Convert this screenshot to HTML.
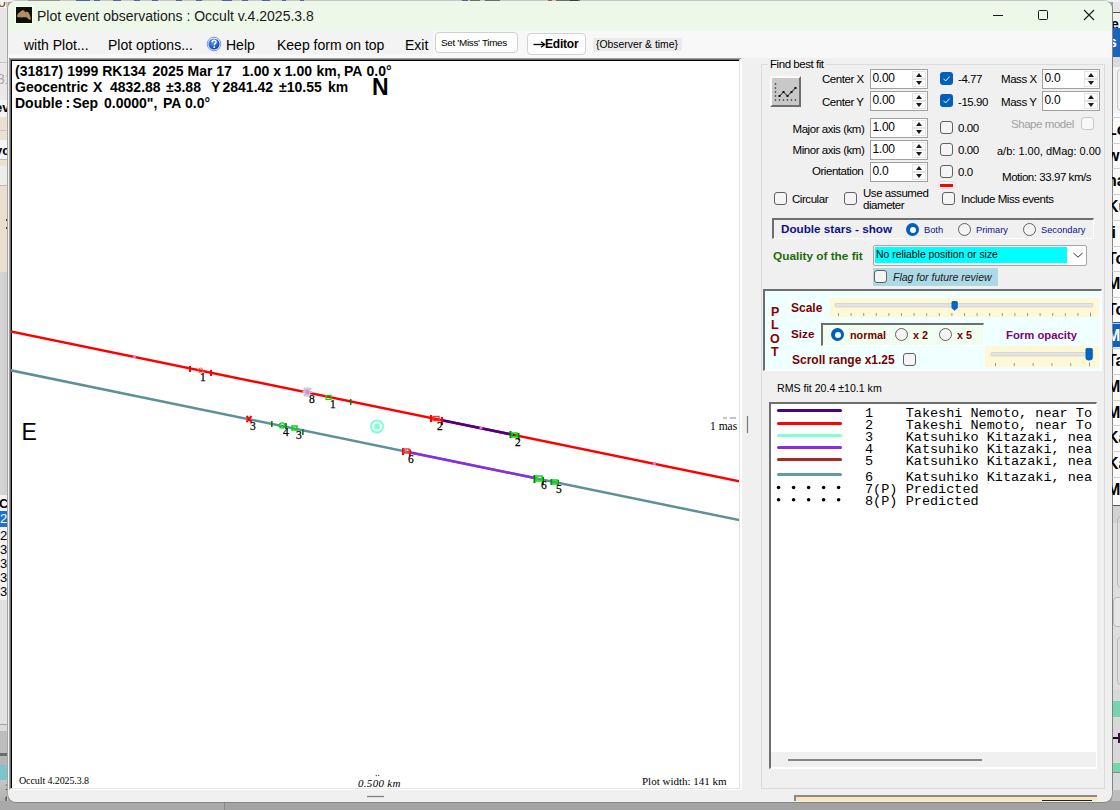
<!DOCTYPE html>
<html><head><meta charset="utf-8">
<style>
*{margin:0;padding:0;box-sizing:border-box}
html,body{width:1120px;height:810px;overflow:hidden;background:#a7a7a7;font-family:"Liberation Sans",sans-serif;position:relative;color:#000}
.a{position:absolute}
.t{position:absolute;white-space:nowrap;line-height:14px;font-size:11.5px;letter-spacing:-0.45px}
.b{font-weight:bold}
.pt{position:absolute;white-space:nowrap;line-height:14px;font-size:14px;font-weight:bold;color:#000}
.cb{position:absolute;width:13px;height:13px;border:1px solid #616161;border-radius:3px;background:#f4f4f4}
.cbk{position:absolute;width:13px;height:13px;border-radius:3px;background:#005fb8}
.rd{position:absolute;width:13px;height:13px;border:1px solid #616161;border-radius:50%;background:#f4f4f4}
.rds{position:absolute;width:13px;height:13px;border-radius:50%;background:#005fb8}
.rds:after{content:"";position:absolute;left:3.5px;top:3.5px;width:6px;height:6px;border-radius:50%;background:#fff}
.nud{position:absolute;width:58px;height:20px;border:1px solid #a0a0a0;background:#fff}
.nud .v{position:absolute;left:1.5px;top:0.5px;font-size:12px;line-height:14px;color:#000;letter-spacing:-0.3px}
.nud .up,.nud .dn{position:absolute;left:41px;width:14px;height:8px;background:#fdfdfd;border:1px solid #e4e4e4}
.nud .up{top:1px}.nud .dn{top:9px}
.nud .up:after,.nud .dn:after{content:"";position:absolute;left:2.8px;border-left:3.5px solid transparent;border-right:3.5px solid transparent}
.nud .up:after{top:1px;border-bottom:4px solid #1a1a1a}
.nud .dn:after{top:1px;border-top:4px solid #1a1a1a}
.mono{position:absolute;white-space:nowrap;font-family:"Liberation Mono",monospace;font-size:13.5px;line-height:12px;color:#000;margin-top:0.5px}
.ll{position:absolute;left:776.5px;width:65px;height:3px;border-radius:1.5px}
</style></head><body>
<!-- ===== background behind window ===== -->
<div class="a" style="left:0;top:0;width:8px;height:810px;background:#e2e2e2;overflow:hidden">
  <div class="a" style="left:0;top:0;width:8px;height:8px;background:#fafafa"></div>
  <div class="t" style="left:-2px;top:-5px;font-size:14px;color:#7a4a10;letter-spacing:0">or</div>
  <div class="a" style="left:0;top:8px;width:8px;height:54px;background:#e6e6e6"></div>
  <div class="a" style="left:0;top:62px;width:8px;height:1px;background:#c6c6c6"></div>
  <div class="a" style="left:0;top:63px;width:8px;height:37px;background:#e9e9e9"></div>
  <div class="t" style="left:-3px;top:72px;font-size:14px;color:#a8a8a8;letter-spacing:0">31</div>
  <div class="a" style="left:0;top:100px;width:8px;height:17px;background:#f3f3f3"></div>
  <div class="t b" style="left:-5px;top:101px;font-size:13px;color:#000;letter-spacing:0">ev</div>
  <div class="a" style="left:0;top:117px;width:8px;height:23px;background:#ebe1d1"></div>
  <div class="a" style="left:0;top:130px;width:8px;height:1px;background:#cfc8bc"></div>
  <div class="a" style="left:0;top:140px;width:8px;height:20px;background:#f5f5f5"></div>
  <div class="t b" style="left:-5px;top:144px;font-size:13px;color:#000;letter-spacing:0">yc</div>
  <div class="a" style="left:0;top:159px;width:8px;height:1px;background:#b8b8b8"></div>
  <div class="a" style="left:0;top:160px;width:8px;height:6px;background:#ebe1d1"></div>
  <div class="a" style="left:0;top:166px;width:8px;height:20px;background:#ececec"></div>
  <div class="a" style="left:0;top:185px;width:8px;height:1px;background:#b8b8b8"></div>
  <div class="a" style="left:0;top:186px;width:8px;height:86px;background:#e9dfcf"></div>
  <div class="a" style="left:6px;top:219px;width:2px;height:2px;background:#5a3a10"></div>
  <div class="a" style="left:6px;top:227px;width:2px;height:2px;background:#5a3a10"></div>
  <div class="a" style="left:0;top:272px;width:8px;height:223px;background:linear-gradient(90deg,#d6d6d6,#cdcdcd)"></div>
  <div class="a" style="left:0;top:495px;width:8px;height:105px;background:#f2f2f2"></div>
  <div class="t b" style="left:-1px;top:497px;font-size:13px;color:#000;letter-spacing:0">C</div>
  <div class="a" style="left:0;top:511px;width:8px;height:16px;background:#1f6fd0"></div>
  <div class="t" style="left:0;top:512px;font-size:13px;color:#fff;letter-spacing:0">2</div>
  <div class="t" style="left:0;top:529px;font-size:13px;color:#000;letter-spacing:0">2</div>
  <div class="t" style="left:0;top:543px;font-size:13px;color:#000;letter-spacing:0">3</div>
  <div class="t" style="left:0;top:557px;font-size:13px;color:#000;letter-spacing:0">3</div>
  <div class="t" style="left:0;top:571px;font-size:13px;color:#000;letter-spacing:0">3</div>
  <div class="t" style="left:0;top:585px;font-size:13px;color:#000;letter-spacing:0">3</div>
  <div class="a" style="left:0;top:600px;width:8px;height:123px;background:#e2e2e2"></div>
  <div class="a" style="left:0;top:724px;width:8px;height:1px;background:#a0a0a0"></div>
  <div class="a" style="left:0;top:725px;width:8px;height:6px;background:#dcdcdc"></div>
  <div class="a" style="left:0;top:731px;width:8px;height:22px;background:#bdbdbd"></div>
  <div class="a" style="left:0;top:753px;width:8px;height:3px;background:#6c6c6c"></div>
  <div class="a" style="left:0;top:756px;width:8px;height:9px;background:#b6b6b6"></div>
  <div class="a" style="left:0;top:765px;width:8px;height:15px;background:#7cc4c8"></div>
  <div class="a" style="left:0;top:780px;width:8px;height:30px;background:linear-gradient(#c6c6c6,#a8a8a8)"></div>
  <div class="t" style="letter-spacing:0;left:5px;top:780px;font-size:9px;color:#333">1</div>
  <div class="t" style="letter-spacing:0;left:5px;top:792px;font-size:10px;color:#333">e</div>
  <div class="a" style="left:7px;top:0;width:1px;height:810px;background:#c8c8c8"></div>
</div>
<div class="a" style="left:1112px;top:0;width:8px;height:810px;background:#f0f0f0;overflow:hidden">
  <div class="a" style="left:0;top:0;width:8px;height:12px;background:#e6e6e6"></div>
  <div class="a" style="left:0;top:12px;width:8px;height:1px;background:#555"></div>
  <div class="t b" style="left:-1px;top:17px;font-size:14px;color:#000;letter-spacing:0">e</div>
  <div class="a" style="left:0;top:28px;width:8px;height:29px;background:#1a64c0"></div>
  <div class="t b" style="left:-3px;top:35px;font-size:14px;color:#fff;letter-spacing:0">s</div>
  <div class="a" style="left:0;top:57px;width:8px;height:10px;background:#dcdcdc"></div>
  <div class="a" style="left:0;top:67px;width:8px;height:45px;background:#f3f3f3"></div>
  <div class="a" style="left:5px;top:69px;width:10px;height:42px;border:1px solid #c8c8c8;border-radius:4px"></div>
  <div class="a" style="left:0;top:113px;width:8px;height:392px;background:#fafafa"></div>
  <div class="a" style="left:0;top:335px;width:8px;height:0;"></div>
  <div class="a" style="left:0;top:322px;width:8px;height:25px;background:#0f5fc0"></div>
  <div class="a" style="left:0;top:505px;width:8px;height:185px;background:#dedede"></div>
  <div class="a" style="left:0;top:505px;width:8px;height:1px;background:#555"></div>
  <div class="a" style="left:0;top:506px;width:8px;height:17px;background:#d2d2d2"></div>
  <div class="a" style="left:5px;top:516px;width:10px;height:72px;border:1px solid #b8b8b8;border-radius:4px"></div>
  <div class="a" style="left:0.5px;top:597px;width:12px;height:30px;border:1px solid #b8b8b8;border-radius:4px;background:#e6e6e6"></div>
  <div class="a" style="left:5px;top:637px;width:10px;height:48px;border:1px solid #b8b8b8;border-radius:4px"></div>
  <div class="a" style="left:0;top:690px;width:8px;height:100px;background:#d8d8d8"></div>
  <div class="a" style="left:0;top:701px;width:8px;height:16px;background:#78d4ac"></div>
  <div class="a" style="left:1px;top:737px;width:7px;height:1.5px;background:#111"></div>
  <div class="a" style="left:6px;top:733px;width:2px;height:10px;background:#3a1040"></div>
  <div class="a" style="left:0;top:762.5px;width:8px;height:9px;background:#78d4ac"></div>
  <div class="a" style="left:0;top:771.5px;width:8px;height:1px;background:#888"></div>
  <div class="a" style="left:0;top:790px;width:8px;height:20px;background:#bdbdbd"></div>
  <div class="a" style="left:0;top:0;width:1px;height:790px;background:#a0a0a0"></div>
  <div class="a" style="left:0;top:117.0px;width:8px;height:1px;background:#d0d0d0"></div>
  <div class="t b" style="left:-5px;top:122.0px;font-size:16px;line-height:16px;color:#000;letter-spacing:0">Lo</div>
  <div class="a" style="left:0;top:142.7px;width:8px;height:1px;background:#d0d0d0"></div>
  <div class="t b" style="left:-5px;top:147.7px;font-size:16px;line-height:16px;color:#000;letter-spacing:0">w</div>
  <div class="a" style="left:0;top:168.4px;width:8px;height:1px;background:#d0d0d0"></div>
  <div class="t b" style="left:-5px;top:173.4px;font-size:16px;line-height:16px;color:#000;letter-spacing:0">na</div>
  <div class="a" style="left:0;top:194.1px;width:8px;height:1px;background:#d0d0d0"></div>
  <div class="t b" style="left:-5px;top:199.1px;font-size:16px;line-height:16px;color:#000;letter-spacing:0">Ku</div>
  <div class="a" style="left:0;top:219.8px;width:8px;height:1px;background:#d0d0d0"></div>
  <div class="t b" style="left:-5px;top:224.8px;font-size:16px;line-height:16px;color:#000;letter-spacing:0">li</div>
  <div class="a" style="left:0;top:245.5px;width:8px;height:1px;background:#d0d0d0"></div>
  <div class="t b" style="left:-5px;top:250.5px;font-size:16px;line-height:16px;color:#000;letter-spacing:0">To</div>
  <div class="a" style="left:0;top:271.2px;width:8px;height:1px;background:#d0d0d0"></div>
  <div class="t b" style="left:-5px;top:276.2px;font-size:16px;line-height:16px;color:#000;letter-spacing:0">Mu</div>
  <div class="a" style="left:0;top:296.9px;width:8px;height:1px;background:#d0d0d0"></div>
  <div class="t b" style="left:-5px;top:301.9px;font-size:16px;line-height:16px;color:#000;letter-spacing:0">To</div>
  <div class="a" style="left:0;top:322.6px;width:8px;height:1px;background:#d0d0d0"></div>
  <div class="t b" style="left:-5px;top:327.6px;font-size:16px;line-height:16px;color:#fff;letter-spacing:0">Mu</div>
  <div class="a" style="left:0;top:348.3px;width:8px;height:1px;background:#d0d0d0"></div>
  <div class="t b" style="left:-5px;top:353.3px;font-size:16px;line-height:16px;color:#000;letter-spacing:0">Ta</div>
  <div class="a" style="left:0;top:374.0px;width:8px;height:1px;background:#d0d0d0"></div>
  <div class="t b" style="left:-5px;top:379.0px;font-size:16px;line-height:16px;color:#000;letter-spacing:0">Me</div>
  <div class="a" style="left:0;top:399.7px;width:8px;height:1px;background:#d0d0d0"></div>
  <div class="t b" style="left:-5px;top:404.7px;font-size:16px;line-height:16px;color:#000;letter-spacing:0">Ma</div>
  <div class="a" style="left:0;top:425.4px;width:8px;height:1px;background:#d0d0d0"></div>
  <div class="t b" style="left:-5px;top:430.4px;font-size:16px;line-height:16px;color:#000;letter-spacing:0">Ka</div>
  <div class="a" style="left:0;top:451.1px;width:8px;height:1px;background:#d0d0d0"></div>
  <div class="t b" style="left:-5px;top:456.1px;font-size:16px;line-height:16px;color:#000;letter-spacing:0">Ka</div>
  <div class="a" style="left:0;top:476.8px;width:8px;height:1px;background:#d0d0d0"></div>
  <div class="t b" style="left:-5px;top:481.8px;font-size:16px;line-height:16px;color:#000;letter-spacing:0">Mu</div>
</div>
<div class="a" style="left:0;top:801px;width:224px;height:9px;background:#a9a9a9"></div><div class="a" style="left:224px;top:801px;width:896px;height:9px;background:#a3a3a3;border-left:1px solid #8a8a8a"></div>

<div class="a" style="left:0;top:0;width:1120px;height:2px;background:#f2f2f2"></div>
<div class="a" style="left:28px;top:0;width:32px;height:1.5px;background:#9a9a9a;opacity:0.7"></div>
<div class="a" style="left:76px;top:0;width:14px;height:1.5px;background:#3040c0;opacity:0.7"></div>
<div class="a" style="left:94px;top:0;width:6px;height:1.5px;background:#3040c0;opacity:0.7"></div>
<div class="a" style="left:113px;top:0;width:8px;height:1.5px;background:#3040c0;opacity:0.7"></div>
<div class="a" style="left:134px;top:0;width:6px;height:1.5px;background:#3040c0;opacity:0.7"></div>
<div class="a" style="left:152px;top:0;width:6px;height:1.5px;background:#3040c0;opacity:0.7"></div>
<div class="a" style="left:176px;top:0;width:6px;height:1.5px;background:#3040c0;opacity:0.7"></div>
<div class="a" style="left:196px;top:0;width:6px;height:1.5px;background:#3040c0;opacity:0.7"></div>
<div class="a" style="left:222px;top:0;width:10px;height:1.5px;background:#3040c0;opacity:0.7"></div>
<div class="a" style="left:242px;top:0;width:6px;height:1.5px;background:#3040c0;opacity:0.7"></div>
<div class="a" style="left:262px;top:0;width:8px;height:1.5px;background:#3040c0;opacity:0.7"></div>
<div class="a" style="left:282px;top:0;width:4px;height:1.5px;background:#3040c0;opacity:0.7"></div>
<div class="a" style="left:300px;top:0;width:4px;height:1.5px;background:#3040c0;opacity:0.7"></div>
<div class="a" style="left:462px;top:0;width:6px;height:1.5px;background:#3040c0;opacity:0.7"></div>
<div class="a" style="left:470px;top:0;width:10px;height:1.5px;background:#555;opacity:0.7"></div>
<div class="a" style="left:485px;top:0;width:15px;height:1.5px;background:#555;opacity:0.7"></div>
<div class="a" style="left:548px;top:0;width:4px;height:1.5px;background:#c03030;opacity:0.7"></div>
<div class="a" style="left:556px;top:0;width:24px;height:1.5px;background:#555;opacity:0.7"></div>
<div class="a" style="left:570px;top:0;width:8px;height:1.5px;background:#333;opacity:0.7"></div>
<!-- ===== window ===== -->
<div class="a" style="left:7px;top:0px;width:1106px;height:803px;border-radius:9px;background:rgba(0,0,0,0.18)"></div>
<div class="a" style="left:8px;top:1px;width:1104px;height:801px;background:#f0f0f0;border-radius:8px;overflow:hidden">
  <div class="a" style="left:0;top:0;width:1104px;height:30px;background:#eef8e8"></div>
  <div class="a" style="left:0;top:30px;width:1104px;height:27px;background:#f8f8f8"></div>
  <div class="a" style="left:0;top:30px;width:425px;height:23px;background:#f3f3f3"></div>
</div>

<!-- title bar -->
<svg class="a" style="left:15px;top:6px" width="18" height="18" viewBox="-1 -1 18 18"><rect x="-1" y="-1" width="18" height="18" fill="#fbfff8"/><rect x="0" y="0" width="16" height="16" fill="#100e0a"/><path d="M1 9.3C1 7.5 3 5.5 4.5 4.5L6.8 3L8 3.6L9.3 5.2C10.2 4.8 11 4.6 11.8 4.9C13.2 5.6 14 8 14.7 11.2C14.9 12.6 14 13 13.2 12.6C12 12 11.2 10.6 10.3 10.3C8.5 10 6 10.6 3.5 10.3C2 10.1 1 10.2 1 9.3Z" fill="#b08d64"/></svg>
<div class="t" style="letter-spacing:0;left:37px;top:8px;font-size:14px;line-height:16px;color:#1a1a1a">Plot event observations : Occult v.4.2025.3.8</div>
<div class="a" style="left:993px;top:15px;width:10px;height:1px;background:#1a1a1a"></div>
<div class="a" style="left:1038px;top:10px;width:10px;height:10px;border:1px solid #1a1a1a;border-radius:1.5px"></div>
<svg class="a" style="left:1083px;top:9px" width="12" height="12" viewBox="0 0 12 12"><path d="M1 1L11 11M11 1L1 11" stroke="#1a1a1a" stroke-width="1.1"/></svg>

<!-- menu bar -->
<div class="t" style="letter-spacing:0;left:24px;top:37px;font-size:14px;line-height:16px">with Plot...</div>
<div class="t" style="letter-spacing:0;left:108px;top:37px;font-size:14px;line-height:16px">Plot options...</div>
<svg class="a" style="left:206px;top:36px" width="16" height="16" viewBox="0 0 16 16"><defs><radialGradient id="hg" cx="0.4" cy="0.3" r="0.7"><stop offset="0" stop-color="#5a9cff"/><stop offset="1" stop-color="#1240b8"/></radialGradient></defs><circle cx="8" cy="8" r="6.8" fill="#fff" stroke="#5a7cc8" stroke-width="0.8"/><circle cx="8" cy="8" r="5.6" fill="url(#hg)"/><path d="M6 6.3C6 4.8 7 4.2 8.1 4.2C9.3 4.2 10.1 5 10.1 6C10.1 7.2 8.6 7.4 8.4 8.6V9.3" stroke="#fff" stroke-width="1.4" fill="none"/><circle cx="8.3" cy="11.2" r="0.9" fill="#fff"/></svg>
<div class="t" style="letter-spacing:0;left:226px;top:37px;font-size:14px;line-height:16px">Help</div>
<div class="t" style="letter-spacing:0;left:277px;top:37px;font-size:14px;line-height:16px">Keep form on top</div>
<div class="t" style="letter-spacing:0;left:405px;top:37px;font-size:14px;line-height:16px">Exit</div>
<div class="a" style="left:434.5px;top:32px;width:83px;height:20.5px;background:#fdfdfd;border:1px solid #d0d0d0;border-radius:4px"></div>
<div class="t" style="letter-spacing:-0.3px;left:441px;top:35.5px;font-size:9.9px">Set 'Miss' Times</div>
<div class="a" style="left:527px;top:33px;width:59px;height:22px;background:#fdfdfd;border:1px solid #d3d3d3;border-radius:4px"></div>
<svg class="a" style="left:533px;top:41px" width="13" height="7" viewBox="0 0 13 7"><path d="M0.5 3.5H11" stroke="#000" stroke-width="1.3"/><path d="M8 0.8L11.8 3.5L8 6.2" stroke="#000" stroke-width="1.3" fill="none"/></svg>
<div class="t b" style="left:545px;top:37px;font-size:12px;color:#000;letter-spacing:-0.2px">Editor</div>
<div class="a" style="left:593px;top:38px;width:89px;height:13px;background:#ebebeb"></div>
<div class="t" style="left:596px;top:38px;font-size:10.4px;letter-spacing:0">{Observer &amp; time}</div>

<!-- ===== plot panel ===== -->
<div class="a" style="left:9px;top:58px;width:733px;height:732px;background:#fff;border-left:1px solid #a0a0a0;border-top:1px solid #a0a0a0;border-right:1px solid #fff;border-bottom:1px solid #fff"></div>
<div class="a" style="left:10px;top:59px;width:730px;height:730px;border-left:1px solid #696969;border-top:1px solid #696969;border-right:1px solid #e3e3e3;border-bottom:1px solid #e3e3e3"></div>
<div class="a" style="left:11px;top:60px;width:1px;height:728px;background:#000"></div>
<div class="a" style="left:11px;top:60px;width:728px;height:1px;background:#000"></div>

<div class="pt" style="left:15px;top:64px">(31817) 1999 RK134</div>
<div class="pt" style="left:152.5px;top:64px">2025 Mar 17</div>
<div class="pt" style="left:242px;top:64px">1.00 x 1.00</div>
<div class="pt" style="left:316.5px;top:64px">km,</div>
<div class="pt" style="left:344px;top:64px">PA</div>
<div class="pt" style="left:366.5px;top:64px">0.0°</div>
<div class="pt" style="left:15px;top:80px">Geocentric</div>
<div class="pt" style="left:93px;top:80px">X</div>
<div class="pt" style="left:110px;top:80px">4832.88</div>
<div class="pt" style="left:166px;top:80px">±3.88</div>
<div class="pt" style="left:211px;top:80px">Y</div>
<div class="pt" style="left:222.5px;top:80px">2841.42</div>
<div class="pt" style="left:279px;top:80px">±10.55</div>
<div class="pt" style="left:328px;top:80px">km</div>
<div class="pt" style="left:15px;top:95.5px">Double</div>
<div class="pt" style="left:65.5px;top:95.5px">:</div>
<div class="pt" style="left:72.5px;top:95.5px">Sep</div>
<div class="pt" style="left:104px;top:95.5px">0.0000",</div>
<div class="pt" style="left:163px;top:95.5px">PA</div>
<div class="pt" style="left:185px;top:95.5px">0.0°</div>
<div class="t b" style="left:372px;top:75.5px;font-size:23px;line-height:23px;color:#000;letter-spacing:0">N</div>
<div class="t" style="left:21.5px;top:421px;font-size:23px;line-height:23px;color:#000;letter-spacing:0">E</div>

<svg class="a" style="left:0;top:0" width="1120" height="810" viewBox="0 0 1120 810">
  <defs><clipPath id="pc"><rect x="11" y="61" width="728" height="727"/></clipPath></defs>
  <g clip-path="url(#pc)" stroke-linecap="butt">
    <line x1="0" y1="329.3" x2="745" y2="482.5" stroke="#ff0000" stroke-width="2.4"/>
    <line x1="0" y1="368.1" x2="745" y2="521.3" stroke="#5f9099" stroke-width="2.5"/>
    <line x1="442" y1="420.2" x2="514" y2="435.0" stroke="#4b0082" stroke-width="2.6"/>
    <line x1="409" y1="452.2" x2="536" y2="478.3" stroke="#8a2be2" stroke-width="2.6"/>
  </g>
  <!-- markers -->
  <g fill="none">
    <circle cx="134.5" cy="356.6" r="1.6" fill="#ff66cc"/>
    <circle cx="481" cy="427.8" r="1.6" fill="#ff66cc"/>
    <circle cx="654.5" cy="463.4" r="1.6" fill="#ff66cc"/>
    <path d="M190 366v6M211 370v6" stroke="#ff0000" stroke-width="2"/>
    <circle cx="200.5" cy="370.5" r="2.5" stroke="#ff6a5a" stroke-width="1"/>
    <path d="M304 388l7 8M311 388l-7 8M302.5 392h10M307.5 387v10" stroke="#b8c4d8" stroke-width="2"/>
    <circle cx="307.5" cy="392" r="2" fill="#ff77cc"/>
    <rect x="326" y="395.5" width="5" height="4" stroke="#00e000" stroke-width="1.2"/>
    <path d="M350.7 399v6" stroke="#008000" stroke-width="1.6"/>
    <path d="M246.5 416l5 6M251.5 416l-5 6" stroke="#ff0000" stroke-width="2"/>
    <path d="M271.8 421v6M302.9 429v6" stroke="#008000" stroke-width="1.6"/>
    <circle cx="282" cy="425.5" r="2.6" stroke="#00e000" stroke-width="1.4"/>
    <path d="M286 423v6" stroke="#008000" stroke-width="1.6"/>
    <rect x="292" y="426" width="5" height="4" stroke="#00dd00" stroke-width="1.5"/>
    <path d="M431 415v7M442 417v8" stroke="#ff0000" stroke-width="2"/>
    <rect x="433" y="416.5" width="6" height="4" stroke="#ff3030" stroke-width="1.4"/>
    <path d="M510.5 431v7M518.5 433v7" stroke="#008000" stroke-width="2"/>
    <rect x="512" y="433" width="5" height="4" stroke="#00e000" stroke-width="1.5"/>
    <path d="M403 448v7M410 449.5v7" stroke="#ff0000" stroke-width="2"/>
    <rect x="404" y="449" width="5" height="4" stroke="#ff3030" stroke-width="1.4"/>
    <path d="M534.5 475v8M543 477v8" stroke="#008000" stroke-width="2"/>
    <rect x="536" y="476" width="6" height="5" stroke="#00e000" stroke-width="1.5"/>
    <path d="M551.5 479v6M558 480v6" stroke="#008000" stroke-width="2"/>
    <rect x="552.5" y="480" width="5" height="4" stroke="#00e000" stroke-width="1.5"/>
    <circle cx="377" cy="426.5" r="6" stroke="#7fffd4" stroke-width="2"/>
    <circle cx="377" cy="426.5" r="3" fill="#7fffd4"/>
    <path d="M747.5 416v17" stroke="#777" stroke-width="1.2"/>
    <path d="M723 418h4M730 418h6" stroke="#888" stroke-width="1"/>
    <path d="M367 796.5h17" stroke="#808080" stroke-width="1.3"/>
    <circle cx="376.3" cy="775.5" r="0.7" fill="#555"/><circle cx="378.7" cy="775.5" r="0.7" fill="#555"/>
  </g>
  <g font-family="Liberation Serif" font-size="11.5" fill="#000" stroke="#000" stroke-width="0.25">
    <text x="200" y="381">1</text>
    <text x="309" y="403">8</text>
    <text x="330" y="408">1</text>
    <text x="250" y="430">3</text>
    <text x="283" y="436">4</text>
    <text x="296" y="439">3</text>
    <text x="437" y="430">2</text>
    <text x="515" y="446">2</text>
    <text x="408" y="463">6</text>
    <text x="541" y="489">6</text>
    <text x="556" y="493">5</text>
  </g>
</svg>
<div class="t" style="letter-spacing:0;left:710px;top:419px;font-family:'Liberation Serif',serif;font-size:11.5px;color:#000">1 mas</div>
<div class="t" style="left:19px;top:774px;font-family:'Liberation Serif',serif;font-size:10px;color:#000;letter-spacing:-0.1px">Occult 4.2025.3.8</div>
<div class="t" style="left:358px;top:776px;font-family:'Liberation Serif',serif;font-style:italic;font-size:11px;color:#000;letter-spacing:0.3px">0.500 km</div>
<div class="t" style="letter-spacing:0;left:642px;top:774px;font-family:'Liberation Serif',serif;font-size:11px;color:#000">Plot width: 141 km</div>

<!-- ===== right panel ===== -->
<div class="a" style="left:761px;top:64px;width:344px;height:725px;border:1px solid #dcdcdc"></div>
<div class="a" style="left:768px;top:58px;width:58px;height:12px;background:#f0f0f0"></div>
<div class="t" style="left:770px;top:57px">Find best fit</div>
<!-- chart button -->
<div class="a" style="left:770px;top:76px;width:31px;height:31px;background:#c8c8c8;border-top:2px solid #fff;border-left:2px solid #fff;border-right:2px solid #6e6e6e;border-bottom:2px solid #6e6e6e"></div>
<svg class="a" style="left:773px;top:79px" width="26" height="26" viewBox="0 0 26 26"><g fill="#222"><circle cx="2.5" cy="5" r="0.8"/><circle cx="2.5" cy="9" r="0.8"/><circle cx="2.5" cy="13" r="0.8"/><circle cx="2.5" cy="17" r="0.8"/><circle cx="2.5" cy="21" r="0.8"/><circle cx="6.5" cy="21" r="0.8"/><circle cx="10.5" cy="21" r="0.8"/><circle cx="14.5" cy="21" r="0.8"/><circle cx="18.5" cy="21" r="0.8"/><circle cx="22.5" cy="21" r="0.8"/></g><path d="M6.5 17L10.5 13L14.5 17L18.5 13L22.5 9" stroke="#111" stroke-width="1" fill="none"/><g fill="#111"><rect x="5.5" y="16" width="2" height="2"/><rect x="9.5" y="12" width="2" height="2"/><rect x="13.5" y="16" width="2" height="2"/><rect x="17.5" y="12" width="2" height="2"/><rect x="21.5" y="8" width="2" height="2"/></g></svg>

<div class="t" style="left:822px;top:72px">Center X</div>
<div class="t" style="left:822px;top:95px">Center Y</div>
<div class="nud" style="left:870px;top:69px"><div class="v">0.00</div><div class="up"></div><div class="dn"></div></div>
<div class="nud" style="left:870px;top:91px"><div class="v">0.00</div><div class="up"></div><div class="dn"></div></div>
<div class="cbk" style="left:940px;top:72px"></div>
<div class="cbk" style="left:940px;top:94px"></div>
<svg class="a" style="left:940px;top:72px" width="13" height="36" viewBox="0 0 13 36"><path d="M3.5 6.8L5.6 8.9L9.6 4.6M3.5 28.8L5.6 30.9L9.6 26.6" stroke="#fff" stroke-width="1" fill="none"/></svg>
<div class="t" style="left:958px;top:72px">-4.77</div>
<div class="t" style="left:958px;top:95px">-15.90</div>
<div class="t" style="left:1001px;top:72px">Mass X</div>
<div class="t" style="left:1001px;top:95px">Mass Y</div>
<div class="nud" style="left:1042px;top:69px"><div class="v">0.0</div><div class="up"></div><div class="dn"></div></div>
<div class="nud" style="left:1042px;top:91px"><div class="v">0.0</div><div class="up"></div><div class="dn"></div></div>

<div class="t" style="left:792.5px;top:122px">Major axis (km)</div>
<div class="t" style="left:792.5px;top:143px">Minor axis (km)</div>
<div class="t" style="left:812px;top:164px">Orientation</div>
<div class="nud" style="left:870px;top:118px"><div class="v">1.00</div><div class="up"></div><div class="dn"></div></div>
<div class="nud" style="left:870px;top:140px"><div class="v">1.00</div><div class="up"></div><div class="dn"></div></div>
<div class="nud" style="left:870px;top:162px"><div class="v">0.0</div><div class="up"></div><div class="dn"></div></div>
<div class="cb" style="left:940px;top:121px"></div>
<div class="cb" style="left:940px;top:143px"></div>
<div class="cb" style="left:940px;top:165px"></div>
<div class="t" style="left:958px;top:121px">0.00</div>
<div class="t" style="left:958px;top:143px">0.00</div>
<div class="t" style="left:958px;top:165px">0.0</div>
<div class="a" style="left:937px;top:181px;width:19px;height:8px;background:#fafafa;border:1px solid #e0e0e0;border-radius:4px"></div>
<div class="a" style="left:940px;top:184px;width:13px;height:2.5px;background:#ff0000"></div>
<div class="t" style="left:1011px;top:117px;color:#a0a0a0">Shape model</div>
<div class="cb" style="left:1081px;top:117px;border-color:#c8c8c8;background:#f8f8f8"></div>
<div class="t" style="letter-spacing:0;left:997px;top:144px;font-size:11px">a/b: 1.00, dMag: 0.00</div>
<div class="t" style="left:1002px;top:170px">Motion: 33.97 km/s</div>

<div class="cb" style="left:774px;top:192px"></div>
<div class="t" style="left:792px;top:192px">Circular</div>
<div class="cb" style="left:844px;top:192px"></div>
<div class="t" style="left:863px;top:186px">Use assumed</div>
<div class="t" style="left:863px;top:198px">diameter</div>
<div class="cb" style="left:942px;top:192px"></div>
<div class="t" style="left:961px;top:192px">Include Miss events</div>

<!-- double stars -->
<div class="a" style="left:772px;top:218px;width:322px;height:21px;border-top:2px solid #6e6e6e;border-left:2px solid #6e6e6e;border-bottom:1px solid #fff;border-right:1px solid #fff"></div>
<div class="t b" style="letter-spacing:0;left:781px;top:222px;font-size:11.7px;color:#10108a">Double stars - show</div>
<div class="rds" style="left:906px;top:223px"></div>
<div class="t" style="letter-spacing:0;left:924px;top:223px;font-size:9.3px;color:#10108a">Both</div>
<div class="rd" style="left:958px;top:223px"></div>
<div class="t" style="letter-spacing:0;left:976px;top:223px;font-size:9.3px;color:#10108a">Primary</div>
<div class="rd" style="left:1023px;top:223px"></div>
<div class="t" style="letter-spacing:0;left:1041px;top:223px;font-size:9.3px;color:#10108a">Secondary</div>

<div class="t b" style="letter-spacing:0;left:773px;top:249px;font-size:11.8px;color:#1f6b0f">Quality of the fit</div>
<div class="a" style="left:873px;top:245px;width:214px;height:21px;background:#fff;border:1px solid #a6a6a6;border-radius:2px"></div>
<div class="a" style="left:875px;top:247px;width:192px;height:16px;background:#00ffff"></div>
<div class="t" style="letter-spacing:0;left:876px;top:248px;font-size:10.4px;color:#000">No reliable position or size</div>
<svg class="a" style="left:1072px;top:251px" width="12" height="8" viewBox="0 0 12 8"><path d="M1.5 2L6 6.2L10.5 2" stroke="#333" stroke-width="1" fill="none"/></svg>
<div class="a" style="left:873px;top:268px;width:125px;height:18px;background:#add8e6"></div>
<div class="cb" style="left:874px;top:270px"></div>
<div class="t" style="letter-spacing:0;left:893px;top:270px;font-style:italic;font-size:10.5px;color:#1a1a1a">Flag for future review</div>

<!-- PLOT box -->
<div class="a" style="left:763px;top:289px;width:339px;height:82px;background:#f0ffff;border-top:2px solid #6e6e6e;border-left:2px solid #6e6e6e;border-bottom:1px solid #fff;border-right:1px solid #fff"></div>
<div class="t b" style="letter-spacing:0;left:771px;top:304.5px;font-size:12.5px;color:#8b0000">P</div>
<div class="t b" style="letter-spacing:0;left:771px;top:318px;font-size:12.5px;color:#8b0000">L</div>
<div class="t b" style="letter-spacing:0;left:770px;top:331.5px;font-size:12.5px;color:#8b0000">O</div>
<div class="t b" style="letter-spacing:0;left:771px;top:345px;font-size:12.5px;color:#8b0000">T</div>
<div class="t b" style="letter-spacing:0;left:791px;top:301px;font-size:12px;color:#7a0000">Scale</div>
<div class="a" style="left:830px;top:298px;width:269px;height:19px;background:#fff8d6"></div>
<svg class="a" style="left:0;top:0" width="1120" height="400" viewBox="0 0 1120 400"><rect x="835" y="303.5" width="258" height="3.5" rx="1" fill="#e3e3e3" stroke="#cfcfcf" stroke-width="0.8"/><g fill="#9a9a9a"><rect x="838.0" y="313" width="1" height="3"/><rect x="850.6" y="313" width="1" height="3"/><rect x="863.2" y="313" width="1" height="3"/><rect x="875.8" y="313" width="1" height="3"/><rect x="888.4" y="313" width="1" height="3"/><rect x="901.0" y="313" width="1" height="3"/><rect x="913.6" y="313" width="1" height="3"/><rect x="926.2" y="313" width="1" height="3"/><rect x="938.8" y="313" width="1" height="3"/><rect x="951.4" y="313" width="1" height="3"/><rect x="964.0" y="313" width="1" height="3"/><rect x="976.6" y="313" width="1" height="3"/><rect x="989.2" y="313" width="1" height="3"/><rect x="1001.8" y="313" width="1" height="3"/><rect x="1014.4" y="313" width="1" height="3"/><rect x="1027.0" y="313" width="1" height="3"/><rect x="1039.6" y="313" width="1" height="3"/><rect x="1052.2" y="313" width="1" height="3"/><rect x="1064.8" y="313" width="1" height="3"/><rect x="1077.4" y="313" width="1" height="3"/><rect x="1090.0" y="312.5" width="1" height="4"/></g><path d="M951.5 302.5Q951.5 301 953 301H956.3Q957.8 301 957.8 302.5V308L954.6 310.8L951.5 308Z" fill="#0067c0"/></svg>

<div class="t b" style="letter-spacing:0;left:791px;top:327px;font-size:11.7px;color:#7a0000">Size</div>
<div class="a" style="left:821px;top:323px;width:163px;height:23px;background:#f0fff0;border-top:2px solid #6e6e6e;border-left:2px solid #6e6e6e;border-bottom:1px solid #fff;border-right:1px solid #fff"></div>
<div class="rds" style="left:831px;top:328px"></div>
<div class="t b" style="letter-spacing:0;left:850px;top:328px;font-size:10.8px;color:#7a0000">normal</div>
<div class="rd" style="left:895px;top:328px"></div>
<div class="t b" style="letter-spacing:0;left:913px;top:328px;font-size:10.8px;color:#7a0000">x 2</div>
<div class="rd" style="left:939px;top:328px"></div>
<div class="t b" style="letter-spacing:0;left:957px;top:328px;font-size:10.8px;color:#7a0000">x 5</div>
<div class="t b" style="letter-spacing:0;left:1006px;top:328px;font-size:11.3px;color:#800080">Form opacity</div>

<div class="t b" style="letter-spacing:0;left:792px;top:353px;font-size:12px;color:#7a0000">Scroll range x1.25</div>
<div class="cb" style="left:903px;top:353px"></div>
<div class="a" style="left:985px;top:346px;width:114px;height:21px;background:#fff8d6"></div>
<svg class="a" style="left:0;top:0" width="1120" height="400" viewBox="0 0 1120 400"><rect x="991" y="352.5" width="102" height="3.5" rx="1" fill="#e3e3e3" stroke="#cfcfcf" stroke-width="0.8"/><g fill="#9a9a9a"><rect x="995.0" y="363" width="1" height="3"/><rect x="1013.8" y="363" width="1" height="3"/><rect x="1032.6" y="363" width="1" height="3"/><rect x="1051.4" y="363" width="1" height="3"/><rect x="1070.2" y="363" width="1" height="3"/><rect x="1089.0" y="362.5" width="1" height="4"/></g><path d="M1085.5 349.5Q1085.5 348 1087 348H1091.3Q1092.8 348 1092.8 349.5V357.5Q1092.8 360.5 1089.2 360.5Q1085.5 360.5 1085.5 357.5Z" fill="#0067c0"/></svg>

<div class="t" style="letter-spacing:0;left:777px;top:381px;font-size:10.6px">RMS fit 20.4 ±10.1 km</div>

<!-- legend listbox -->
<div class="a" style="left:769px;top:402px;width:328px;height:367px;background:#fff;border-top:2px solid #6e6e6e;border-left:2px solid #6e6e6e;border-right:1px solid #fff;border-bottom:1px solid #fff"></div>
<div class="a" style="left:771px;top:752px;width:325px;height:15px;background:#f0f0f0"></div>
<div class="a" style="left:788px;top:759px;width:194px;height:2px;background:#858585"></div>
<div class="ll" style="top:409.4px;background:#4b0082"></div>
<div class="ll" style="top:421.5px;background:#ff0000"></div>
<div class="ll" style="top:433.5px;background:#7fffd4"></div>
<div class="ll" style="top:445.5px;background:#8a2be2"></div>
<div class="ll" style="top:457.5px;background:#a52a2a"></div>
<div class="ll" style="top:473.1px;background:#5f9ea0"></div>
<svg class="a" style="left:770px;top:480px" width="80" height="30" viewBox="0 0 80 30"><g fill="#000"><circle cx="8.6" cy="7.5" r="1.8"/><circle cx="23.6" cy="7.5" r="1.8"/><circle cx="38.6" cy="7.5" r="1.8"/><circle cx="53.6" cy="7.5" r="1.8"/><circle cx="68.6" cy="7.5" r="1.8"/><circle cx="8.6" cy="19.7" r="1.8"/><circle cx="23.6" cy="19.7" r="1.8"/><circle cx="38.6" cy="19.7" r="1.8"/><circle cx="53.6" cy="19.7" r="1.8"/><circle cx="68.6" cy="19.7" r="1.8"/></g></svg>
<div class="a" style="left:771px;top:404px;width:325px;height:348px;overflow:hidden">
  <div class="mono" style="left:94px;top:3px">1</div><div class="mono" style="left:134.7px;top:3px">Takeshi Nemoto, near To</div>
  <div class="mono" style="left:94px;top:15px">2</div><div class="mono" style="left:134.7px;top:15px">Takeshi Nemoto, near To</div>
  <div class="mono" style="left:94px;top:27px">3</div><div class="mono" style="left:134.7px;top:27px">Katsuhiko Kitazaki, nea</div>
  <div class="mono" style="left:94px;top:39px">4</div><div class="mono" style="left:134.7px;top:39px">Katsuhiko Kitazaki, nea</div>
  <div class="mono" style="left:94px;top:51px">5</div><div class="mono" style="left:134.7px;top:51px">Katsuhiko Kitazaki, nea</div>
  <div class="mono" style="left:94px;top:67px">6</div><div class="mono" style="left:134.7px;top:67px">Katsuhiko Kitazaki, nea</div>
  <div class="mono" style="left:94px;top:79px">7(P)</div><div class="mono" style="left:134.7px;top:79px">Predicted</div>
  <div class="mono" style="left:94px;top:91px">8(P)</div><div class="mono" style="left:134.7px;top:91px">Predicted</div>
</div>

<!-- bottom beige control -->
<div class="a" style="left:794px;top:795px;width:303px;height:6px;background:#ffe4b5;border-top:2px solid #8a8a8a;border-left:2px solid #8a8a8a"></div>
<div class="a" style="left:1042px;top:799.5px;width:50px;height:1.5px;background:#222"></div>
</body></html>
